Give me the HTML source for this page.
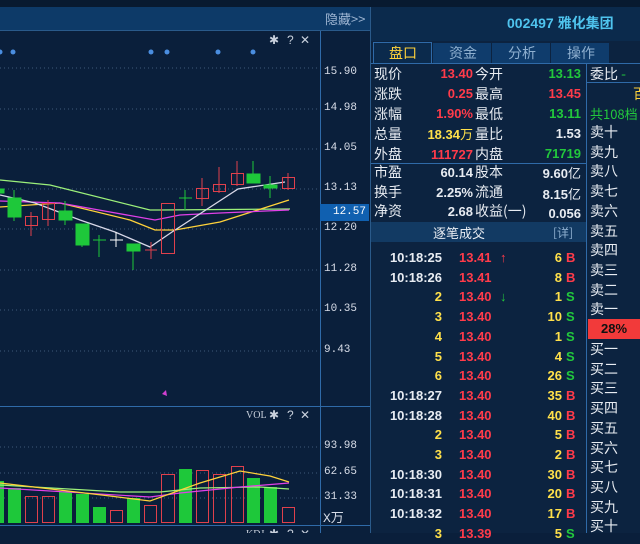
<!DOCTYPE html>
<html><head><meta charset="utf-8"><style>
*{margin:0;padding:0;box-sizing:border-box}
body{width:640px;height:533px;overflow:hidden;background:#0a1f3b;font-family:"Liberation Sans","Noto Sans CJK SC",sans-serif;position:relative}
.a{position:absolute;white-space:nowrap}
.ax{font-family:"Liberation Mono","Noto Sans CJK SC",monospace;font-size:11px;color:#d8dde8}
.cn{font-size:14px;color:#e8ecf2;font-family:"Noto Sans CJK SC",sans-serif}
.n{font-size:13px;font-weight:bold;text-align:right}
.r{color:#ff3b4a}.g{color:#22c83c}.y{color:#ffe04a}.w{color:#e8ecf2}
.tl{line-height:19.7px;font-size:13px;font-weight:bold}
</style></head><body>
<div class="a" style="left:0;top:0;width:640px;height:7px;background:#081a30"></div>
<div class="a" style="left:0;top:7px;width:370px;height:24px;background:#0d3a68;border-bottom:1px solid #2a5a8a"></div>
<div class="a cn" style="left:325px;top:9px;font-size:13px;color:#9fb6d3">隐藏&gt;&gt;</div>
<svg class="a" style="left:0;top:31px" width="370" height="502">
<line x1="320.5" y1="0" x2="320.5" y2="502" stroke="#2f6aa8"/>
<line x1="0" y1="375.5" x2="370" y2="375.5" stroke="#2f6aa8"/>
<line x1="0" y1="494.5" x2="370" y2="494.5" stroke="#2f6aa8"/>
<g stroke="#3d5a7a" stroke-dasharray="1 3">
<line x1="0" y1="37" x2="320" y2="37"/><line x1="0" y1="78" x2="320" y2="78"/><line x1="0" y1="118" x2="320" y2="118"/><line x1="0" y1="158" x2="320" y2="158"/><line x1="0" y1="198" x2="320" y2="198"/><line x1="0" y1="239" x2="320" y2="239"/><line x1="0" y1="279" x2="320" y2="279"/><line x1="0" y1="320" x2="320" y2="320"/>
<line x1="0" y1="416" x2="320" y2="416"/><line x1="0" y1="442" x2="320" y2="442"/><line x1="0" y1="467" x2="320" y2="467"/>
</g>
<g fill="#4a8ee0"><circle cx="0" cy="21" r="2.5"/><circle cx="13" cy="21" r="2.5"/><circle cx="151" cy="21" r="2.5"/><circle cx="167" cy="21" r="2.5"/><circle cx="218" cy="21" r="2.5"/><circle cx="253" cy="21" r="2.5"/></g>
<g fill="none" stroke-width="1.3">
<polyline stroke="#9cf07a" points="0,149 50,154 150,179 160,179 290,178"/>
<polyline stroke="#ffd23a" points="0,176 60,172 130,189 155,199 175,199 220,191 289,169"/>
<polyline stroke="#e040e8" points="0,170 60,172 110,181 155,189 180,184 220,182 289,179"/>
<polyline stroke="#d8d8e8" points="0,164 35,172 80,189 115,201 150,216 172,201 238,158 285,151"/>
</g>
<g fill="#1ec83a" stroke="#1ec83a">
<rect x="0" y="158" width="4" height="4"/><line x1="14" y1="159" x2="14" y2="190"/><rect x="8" y="167" width="13" height="19"/>
<line x1="65" y1="170" x2="65" y2="194"/><rect x="59" y="180" width="13" height="9"/>
<line x1="82" y1="193" x2="82" y2="216"/><rect x="76" y="193" width="13" height="21"/>
<line x1="99" y1="204" x2="99" y2="226"/><line x1="93" y1="209" x2="106" y2="209"/>
<line x1="133" y1="213" x2="133" y2="239"/><rect x="127" y="213" width="13" height="7"/>
<line x1="185" y1="159" x2="185" y2="179"/><line x1="179" y1="167" x2="192" y2="167"/>
<line x1="253" y1="130" x2="253" y2="152"/><rect x="247" y="143" width="13" height="9"/>
<line x1="270" y1="145" x2="270" y2="167"/><rect x="264" y="154" width="13" height="3"/>
</g>
<g stroke="#fff"><line x1="116" y1="201" x2="116" y2="216"/><line x1="110" y1="209" x2="123" y2="209"/></g>
<g fill="none" stroke="#e0404c">
<line x1="31" y1="181" x2="31" y2="205"/><rect x="25.5" y="185.5" width="12" height="9"/>
<line x1="48" y1="169" x2="48" y2="195"/><rect x="42.5" y="172.5" width="12" height="16"/>
<line x1="151" y1="211" x2="151" y2="228"/><line x1="145" y1="219" x2="157" y2="219"/>
<rect x="161.5" y="172.5" width="13" height="50"/>
<line x1="202" y1="147" x2="202" y2="175"/><rect x="196.5" y="157.5" width="12" height="10"/>
<line x1="219" y1="136" x2="219" y2="162"/><rect x="213.5" y="153.5" width="12" height="7"/>
<line x1="237" y1="130" x2="237" y2="155"/><rect x="231.5" y="142.5" width="12" height="11"/>
<line x1="288" y1="142" x2="288" y2="159"/><rect x="282.5" y="146.5" width="12" height="11"/>
</g>
<polygon points="166,359 162,363 167,365" fill="#d040d0"/>
<g fill="#1ec83a"><rect x="0" y="450" width="4" height="42"/><rect x="8" y="457" width="13" height="35"/><rect x="59" y="461" width="13" height="31"/><rect x="76" y="463" width="13" height="29"/><rect x="93" y="476" width="13" height="16"/><rect x="127" y="467" width="13" height="25"/><rect x="179" y="438" width="13" height="54"/><rect x="247" y="447" width="13" height="45"/><rect x="264" y="456" width="13" height="36"/></g>
<g fill="none" stroke="#e0404c"><rect x="25.5" y="465.5" width="12" height="26"/><rect x="42.5" y="465.5" width="12" height="26"/><rect x="110.5" y="479.5" width="12" height="12"/><rect x="144.5" y="474.5" width="12" height="17"/><rect x="161.5" y="443.5" width="13" height="48"/><rect x="196.5" y="439.5" width="12" height="52"/><rect x="213.5" y="443.5" width="12" height="48"/><rect x="231.5" y="435.5" width="12" height="56"/><rect x="282.5" y="476.5" width="12" height="15"/></g>
<g fill="none" stroke-width="1.2">
<polyline stroke="#9cf07a" points="0,454 120,461 160,461 200,457 260,456 289,458"/>
<polyline stroke="#e040e8" points="0,457 150,466 180,462 240,456 289,452"/>
<polyline stroke="#ffd23a" points="0,452 110,465 150,470 200,452 240,440 270,445 289,451"/>
</g>
<g fill="#c8d0dc" font-size="12" font-family="Liberation Sans"><text x="269" y="13">✱</text><text x="287" y="13">?</text><text x="300" y="13">✕</text>
<text x="269" y="388">✱</text><text x="287" y="388">?</text><text x="300" y="388">✕</text>
<text x="269" y="507">✱</text><text x="287" y="507">?</text><text x="300" y="507">✕</text></g>
<text x="246" y="387" fill="#c8d0dc" font-size="10" font-family="Liberation Serif">VOL</text>
<text x="246" y="506" fill="#c8d0dc" font-size="10" font-family="Liberation Serif">KDJ</text>
</svg>
<div class="a ax" style="left:324px;top:66px">15.90</div>
<div class="a ax" style="left:324px;top:102px">14.98</div>
<div class="a ax" style="left:324px;top:142px">14.05</div>
<div class="a ax" style="left:324px;top:182px">13.13</div>
<div class="a ax" style="left:320px;top:204px;width:49px;height:17px;background:#1060b0;color:#fff;text-align:right;padding:2px 3px 0 0">12.57</div>
<div class="a ax" style="left:324px;top:222px">12.20</div>
<div class="a ax" style="left:324px;top:263px">11.28</div>
<div class="a ax" style="left:324px;top:303px">10.35</div>
<div class="a ax" style="left:324px;top:344px">9.43</div>
<div class="a ax" style="left:324px;top:440px">93.98</div>
<div class="a ax" style="left:324px;top:466px">62.65</div>
<div class="a ax" style="left:324px;top:491px">31.33</div>
<div class="a ax" style="left:323px;top:507px;font-size:13px">X万</div>

<div class="a" style="left:370px;top:7px;width:270px;height:526px;background:#0c2340;border-left:1px solid #2a5a8a"></div>
<div class="a" style="left:371px;top:7px;width:269px;height:34px;background:#0b2a4c"></div>
<div class="a" style="left:507px;top:13px;font-size:14px;font-weight:bold;color:#4fc4ee;font-family:'Liberation Sans','Noto Sans CJK SC',sans-serif">002497 雅化集团</div>
<div class="a" style="left:373px;top:42px;width:59px;height:21px;background:#0b2a4c;border:1px solid #2f6aa8;border-bottom:none"></div>
<div class="a" style="left:433px;top:43px;width:58px;height:20px;background:#0f3c6c"></div>
<div class="a" style="left:492px;top:43px;width:58px;height:20px;background:#0f3c6c"></div>
<div class="a" style="left:551px;top:43px;width:58px;height:20px;background:#0f3c6c"></div>
<div class="a cn" style="left:389px;top:43px;color:#ffd23a">盘口</div>
<div class="a cn" style="left:449px;top:43px;color:#8fb0d0">资金</div>
<div class="a cn" style="left:508px;top:43px;color:#8fb0d0">分析</div>
<div class="a cn" style="left:567px;top:43px;color:#8fb0d0">操作</div>
<div class="a" style="left:371px;top:63px;width:269px;height:1px;background:#2f6aa8"></div>
<div class="a" style="left:586px;top:63px;width:1px;height:470px;background:#2f6aa8"></div>
<div class="a" style="left:371px;top:163px;width:215px;height:1px;background:#2f6aa8"></div>
<div class="a" style="left:371px;top:222px;width:215px;height:20px;background:#123a63"></div>
<div class="a cn" style="left:433px;top:223px;font-size:13px">逐笔成交</div>
<div class="a cn" style="left:553px;top:224px;font-size:12px;color:#8fb0d0">[详]</div>
<div class="a" style="left:587px;top:82px;width:53px;height:1px;background:#2f6aa8"></div>

<div style="position:absolute;left:374px;top:64px;line-height:20px">
<div class="cn">现价<br>涨跌<br>涨幅<br>总量<br>外盘</div></div>
<div style="position:absolute;left:475px;top:64px;line-height:20px"><div class="cn">今开<br>最高<br>最低<br>量比<br>内盘</div></div>
<div class="a n" style="left:400px;top:64px;width:73px;line-height:20px"><span class="r">13.40</span><br><span class="r">0.25</span><br><span class="r">1.90%</span><br><span class="y">18.34<span style="font-weight:normal;font-family:'Noto Sans CJK SC'">万</span></span><br><span class="r">111727</span></div>
<div class="a n" style="left:510px;top:64px;width:71px;line-height:20px"><span class="g">13.13</span><br><span class="r">13.45</span><br><span class="g">13.11</span><br><span class="w">1.53</span><br><span class="g">71719</span></div>
<div style="position:absolute;left:374px;top:163px;line-height:19.5px"><div class="cn">市盈<br>换手<br>净资</div></div>
<div style="position:absolute;left:475px;top:163px;line-height:19.5px"><div class="cn">股本<br>流通<br>收益(一)</div></div>
<div class="a n w" style="left:400px;top:163px;width:73px;line-height:19.5px">60.14<br>2.25%<br>2.68</div>
<div class="a n w" style="left:500px;top:163px;width:81px;line-height:19.5px">9.60<span style="font-weight:normal;font-family:'Noto Sans CJK SC'">亿</span><br>8.15<span style="font-weight:normal;font-family:'Noto Sans CJK SC'">亿</span><br>0.056</div>

<div class="a cn" style="left:590px;top:64px">委比 <span style="color:#22c83c">-</span></div>
<div class="a cn" style="left:633px;top:84px;color:#ffd23a">百</div>
<div class="a cn" style="left:590px;top:104px;color:#22c83c;font-size:13px">共108档</div>
<div class="a cn" style="left:590px;top:123px;line-height:19.7px">卖十<br>卖九<br>卖八<br>卖七<br>卖六<br>卖五<br>卖四<br>卖三<br>卖二<br>卖一</div>
<div class="a" style="left:588px;top:319px;width:52px;height:20px;background:#f23a3a;color:#111;font-size:13px;font-weight:bold;text-align:center;line-height:20px">28%</div>
<div class="a cn" style="left:590px;top:340px;line-height:19.7px">买一<br>买二<br>买三<br>买四<br>买五<br>买六<br>买七<br>买八<br>买九<br>买十</div>

<div class="a n tl" style="left:380px;top:248px;width:62px"><span class="w">10:18:25</span><br><span class="w">10:18:26</span><br><span class="y">2</span><br><span class="y">3</span><br><span class="y">4</span><br><span class="y">5</span><br><span class="y">6</span><br><span class="w">10:18:27</span><br><span class="w">10:18:28</span><br><span class="y">2</span><br><span class="y">3</span><br><span class="w">10:18:30</span><br><span class="w">10:18:31</span><br><span class="w">10:18:32</span><br><span class="y">3</span></div>
<div class="a r tl" style="left:459px;top:248px">13.41<br>13.41<br>13.40<br>13.40<br>13.40<br>13.40<br>13.40<br>13.40<br>13.40<br>13.40<br>13.40<br>13.40<br>13.40<br>13.40<br>13.39</div>
<div class="a r tl" style="left:500px;top:248px">↑</div>
<div class="a g tl" style="left:500px;top:287.4px">↓</div>
<div class="a n y tl" style="left:520px;top:248px;width:42px">6<br>8<br>1<br>10<br>1<br>4<br>26<br>35<br>40<br>5<br>2<br>30<br>20<br>17<br>5</div>
<div class="a tl" style="left:566px;top:248px"><span class="r">B</span><br><span class="r">B</span><br><span class="g">S</span><br><span class="g">S</span><br><span class="g">S</span><br><span class="g">S</span><br><span class="g">S</span><br><span class="r">B</span><br><span class="r">B</span><br><span class="r">B</span><br><span class="r">B</span><br><span class="r">B</span><br><span class="r">B</span><br><span class="r">B</span><br><span class="g">S</span></div>
</body></html>
